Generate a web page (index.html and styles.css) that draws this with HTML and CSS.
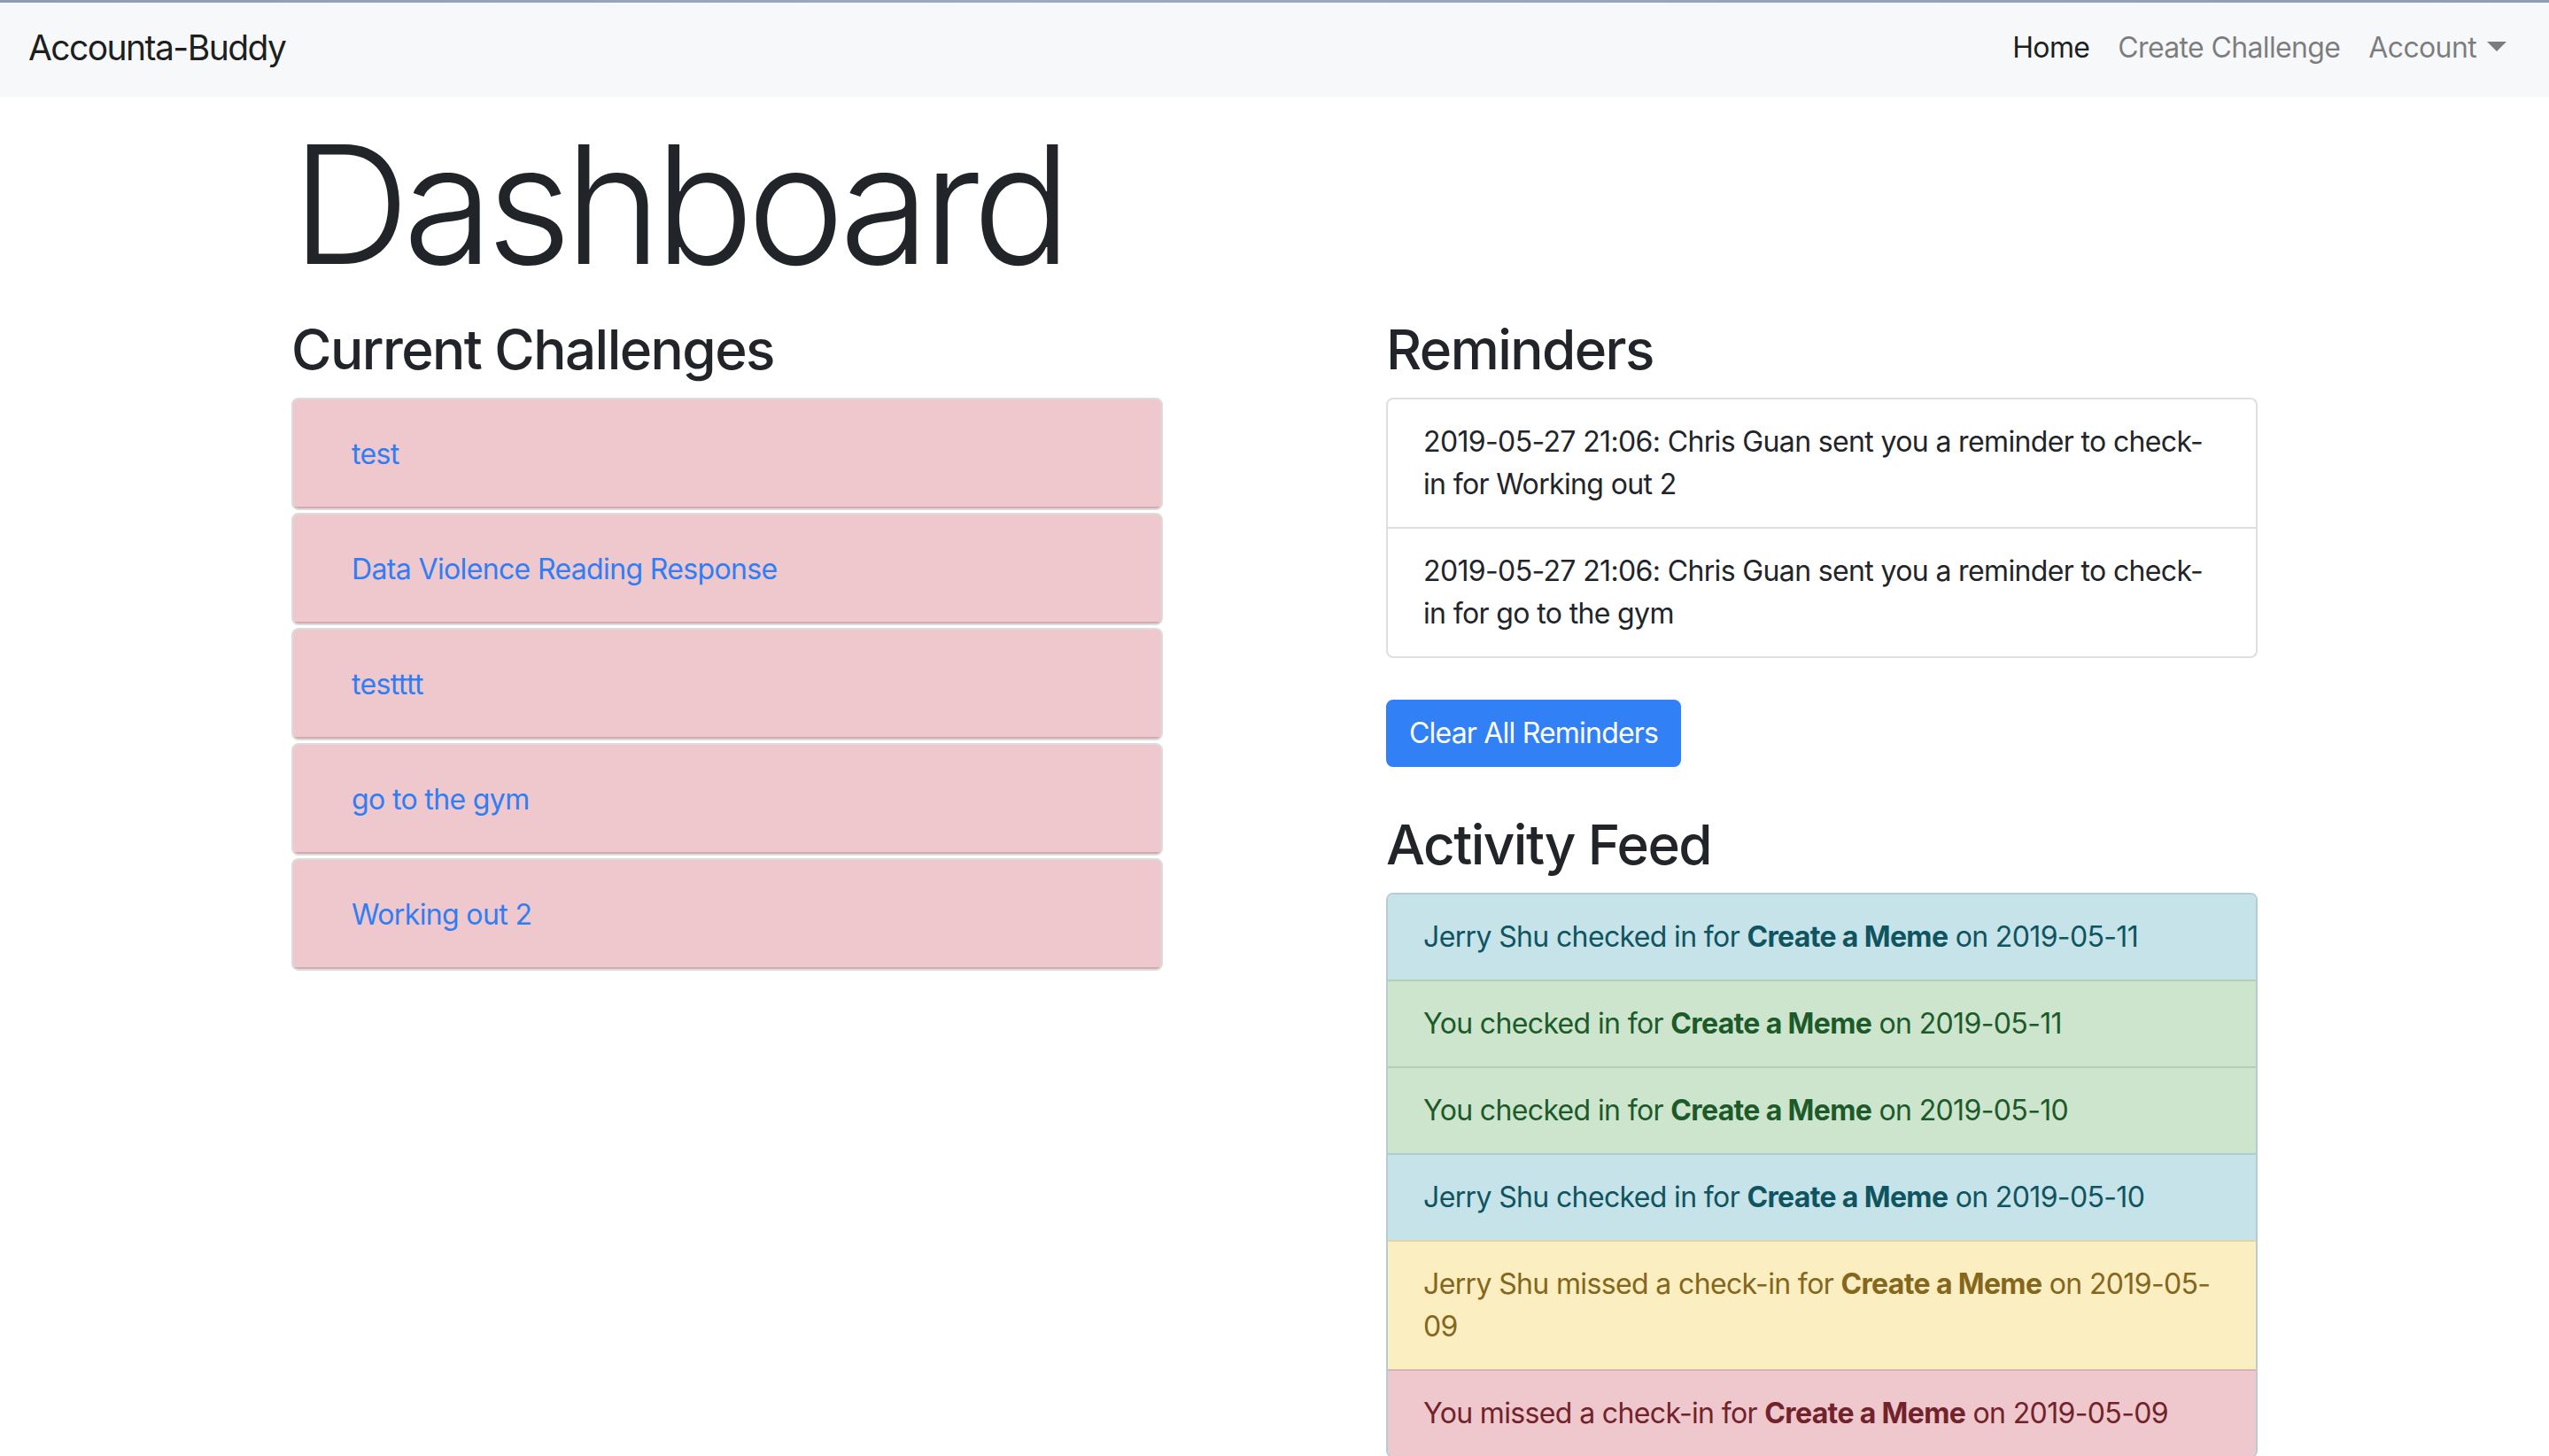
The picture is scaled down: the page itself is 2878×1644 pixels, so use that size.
FILE: index.html
```html
<!DOCTYPE html>
<html lang="en">
<head>
<meta charset="utf-8">
<title>Accounta-Buddy</title>
<link rel="stylesheet" href="styles.css">
</head>
<body>
<div class="chrome-line"></div>
<nav class="navbar">
  <a class="brand" href="#">Accounta-Buddy</a>
  <ul class="nav">
    <li><a class="nav-link active" href="#">Home</a></li>
    <li><a class="nav-link" href="#">Create Challenge</a></li>
    <li><a class="nav-link dropdown-toggle" href="#">Account</a></li>
  </ul>
</nav>
<main class="container">
  <h1 class="display">Dashboard</h1>
  <div class="row">
    <section class="col">
      <h2 class="heading">Current Challenges</h2>
      <div class="challenge"><div class="challenge-inner"><a href="#">test</a></div></div>
      <div class="challenge"><div class="challenge-inner"><a href="#">Data Violence Reading Response</a></div></div>
      <div class="challenge"><div class="challenge-inner"><a href="#">testttt</a></div></div>
      <div class="challenge"><div class="challenge-inner"><a href="#">go to the gym</a></div></div>
      <div class="challenge"><div class="challenge-inner"><a href="#">Working out 2</a></div></div>
    </section>
    <section class="col">
      <h2 class="heading">Reminders</h2>
      <ul class="list-group">
        <li class="list-item">2019-05-27 21:06: Chris Guan sent you a reminder to check-in for Working out 2</li>
        <li class="list-item">2019-05-27 21:06: Chris Guan sent you a reminder to check-in for go to the gym</li>
      </ul>
      <button class="btn" type="button">Clear All Reminders</button>
      <h2 class="heading feed-title">Activity Feed</h2>
      <ul class="list-group feed">
        <li class="list-item info">Jerry Shu checked in for <strong>Create a Meme</strong> on 2019-05-11</li>
        <li class="list-item success">You checked in for <strong>Create a Meme</strong> on 2019-05-11</li>
        <li class="list-item success">You checked in for <strong>Create a Meme</strong> on 2019-05-10</li>
        <li class="list-item info">Jerry Shu checked in for <strong>Create a Meme</strong> on 2019-05-10</li>
        <li class="list-item warning">Jerry Shu missed a check-in for <strong>Create a Meme</strong> on 2019-05-<wbr>09</li>
        <li class="list-item danger">You missed a check-in for <strong>Create a Meme</strong> on 2019-05-09</li>
      </ul>
    </section>
  </div>
</main>
</body>
</html>
```

FILE: styles.css
```css
* { box-sizing: border-box; }

html, body {
  margin: 0;
  padding: 0;
  background: #ffffff;
}

body {
  font-family: "Inter", "Noto Sans", "Liberation Sans", sans-serif;
  font-size: 32px;
  line-height: 48px;
  color: #212529;
  letter-spacing: -0.02em;
}

a { text-decoration: none; }

.chrome-line {
  height: 3px;
  background: linear-gradient(90deg, #8c9cb4, #9aaac0 40%, #8d9db6);
}

.navbar {
  display: flex;
  align-items: center;
  justify-content: space-between;
  padding: 11px 32px 16px 32px;
  background: #f7f8fa;
}

.brand {
  display: block;
  padding: 10px 0;
  font-size: 39px;
  line-height: 60px;
  color: rgba(0, 0, 0, 0.9);
  letter-spacing: -0.04em;
}

.nav {
  display: flex;
  list-style: none;
  margin: 0;
  padding: 0;
}

.nav-link {
  display: flex;
  align-items: center;
  padding: 16px 16px;
  color: rgba(0, 0, 0, 0.5);
}

.nav-link.active { color: rgba(0, 0, 0, 0.9); }

.dropdown-toggle::after {
  content: "";
  display: inline-block;
  margin-left: 12px;
  border-top: 11px solid rgba(0, 0, 0, 0.5);
  border-left: 11px solid transparent;
  border-right: 11px solid transparent;
  margin-top: -4px;
}

.container {
  width: 2220px;
  margin: 0 auto;
}

.display {
  margin: 6px 0 10px 0;
  font-size: 186px;
  line-height: 230px;
  font-weight: 300;
  letter-spacing: -0.042em;
}

.row {
  display: grid;
  grid-template-columns: 984px 984px;
  column-gap: 252px;
  align-items: start;
}

.heading {
  margin: 0 0 16px 0;
  font-size: 62px;
  line-height: 77px;
  font-weight: 500;
  letter-spacing: -0.025em;
}

.challenge {
  border: 2px solid #dcdcdc;
  border-radius: 8px;
  background: #eec8cc;
  margin-bottom: 3px;
  overflow: hidden;
}

.challenge-inner {
  padding: 38px 64px 35px 66px;
  border-bottom: 2px solid #d3abaf;
}

.challenge-inner a { color: #2f7ef5; }

.list-group {
  list-style: none;
  margin: 0;
  padding: 0;
  border: 2px solid #dfdfdf;
  border-radius: 8px;
  overflow: hidden;
}

.list-item {
  padding: 24px 40px;
  border-top: 2px solid #dfdfdf;
}

.list-item:first-child { border-top: 0; }

.btn {
  display: block;
  margin-top: 47px;
  padding: 12px 24px;
  border: 2px solid #3180f6;
  border-radius: 8px;
  background: #3180f6;
  color: #ffffff;
  font-family: inherit;
  font-size: 32px;
  line-height: 48px;
  letter-spacing: -0.025em;
}

.feed-title { margin-top: 49px; }

.feed { border-color: #b5cdd2; }

.feed .list-item { border-top-color: rgba(0, 0, 0, 0.1); }

.info { background: #c5e3e8; color: #0f5461; }
.success { background: #cde4cd; color: #1c5a2a; }
.warning { background: #fbeec1; color: #84661c; }
.danger { background: #eec8cc; color: #72222b; }

strong { font-weight: 700; }
```
